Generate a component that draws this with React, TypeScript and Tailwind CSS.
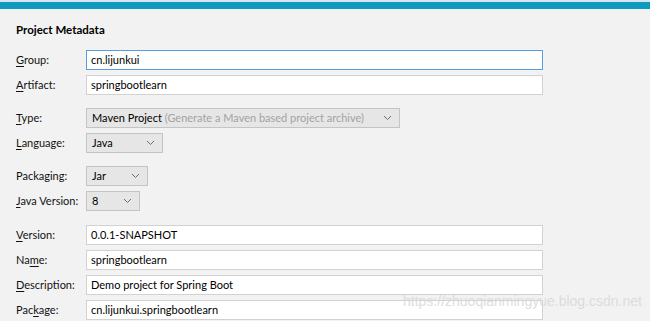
import { ReactNode } from 'react';

function Chevron() {
  return (
    <svg width="9" height="6" viewBox="0 0 9 6" className="shrink-0">
      <path d="M1 1 L4.5 4.5 L8 1" fill="none" stroke="#6f6f6f" strokeWidth="1" />
    </svg>
  );
}

// label with one underlined mnemonic letter
function Label({ text, mn }: { text: string; mn: number }) {
  return (
    <span className="w-[70px] shrink-0 whitespace-nowrap text-[11px] text-[#111]">
      {text.slice(0, mn)}
      <span className="underline underline-offset-2">{text[mn]}</span>
      {text.slice(mn + 1)}
    </span>
  );
}

function Row({ label, children }: { label: ReactNode; children: ReactNode }) {
  return (
    <div className="flex h-[20px] items-center">
      {label}
      {children}
    </div>
  );
}

function TextField({ value, focused }: { value: string; focused?: boolean }) {
  return (
    <div
      className={
        focused
          ? 'flex h-[20px] w-[457px] items-center border border-[#569de5] bg-white px-[4px] text-[11px] text-[#000]'
          : 'flex h-[20px] w-[457px] items-center border border-[#d2d2d2] bg-white px-[4px] text-[11px] text-[#000]'
      }
    >
      {value}
    </div>
  );
}

function Select({ width, children }: { width: string; children: ReactNode }) {
  return (
    <div
      className={`flex h-[20px] items-center justify-between border border-[#c4c4c4] bg-[#e6e6e6] pl-[5px] pr-[7px] text-[11px] text-[#000] ${width}`}
    >
      <span className="whitespace-nowrap">{children}</span>
      <Chevron />
    </div>
  );
}

export default function App() {
  return (
    <div
      className="relative h-[321px] w-[650px] overflow-hidden bg-[#f2f2f2]"
      style={{ fontFamily: 'Lato, "Noto Sans", sans-serif' }}
    >
      <div className="h-[2px] bg-[#d5e6ec]" />
      <div className="h-[7px] bg-[#0f9bc0]" />

      <div className="flex flex-col pl-[16px]">
        <div className="mt-[13px] h-[16px] text-[11.5px] font-bold leading-[16px] text-[#000]">Project Metadata</div>

        <div className="mt-[12px] flex flex-col gap-[5px]">
          <Row label={<Label text="Group:" mn={0} />}>
            <TextField value="cn.lijunkui" focused />
          </Row>
          <Row label={<Label text="Artifact:" mn={0} />}>
            <TextField value="springbootlearn" />
          </Row>
        </div>

        <div className="mt-[13px] flex flex-col gap-[5px]">
          <Row label={<Label text="Type:" mn={0} />}>
            <Select width="w-[314px]">
              Maven Project <span className="text-[#a3a3a3]">(Generate a Maven based project archive)</span>
            </Select>
          </Row>
          <Row label={<Label text="Language:" mn={0} />}>
            <Select width="w-[77px]">Java</Select>
          </Row>
        </div>

        <div className="mt-[13px] flex flex-col gap-[5px]">
          <Row label={<span className="w-[70px] shrink-0 whitespace-nowrap text-[11px] text-[#111]">Packaging:</span>}>
            <Select width="w-[62px]">Jar</Select>
          </Row>
          <Row label={<Label text="Java Version:" mn={0} />}>
            <Select width="w-[54px]">8</Select>
          </Row>
        </div>

        <div className="mt-[14px] flex flex-col gap-[5px]">
          <Row label={<Label text="Version:" mn={0} />}>
            <TextField value="0.0.1-SNAPSHOT" />
          </Row>
          <Row label={<Label text="Name:" mn={2} />}>
            <TextField value="springbootlearn" />
          </Row>
          <Row label={<Label text="Description:" mn={0} />}>
            <TextField value="Demo project for Spring Boot" />
          </Row>
          <Row label={<Label text="Package:" mn={3} />}>
            <TextField value="cn.lijunkui.springbootlearn" />
          </Row>
        </div>
      </div>

      {/* blog watermark */}
      <div className="absolute left-[403px] top-[292px] text-[14px] leading-[18px] text-[#dadada] opacity-90" style={{ fontFamily: '"Liberation Sans", sans-serif' }}>
        https://zhuoqianmingyue.blog.csdn.net
      </div>
    </div>
  );
}
